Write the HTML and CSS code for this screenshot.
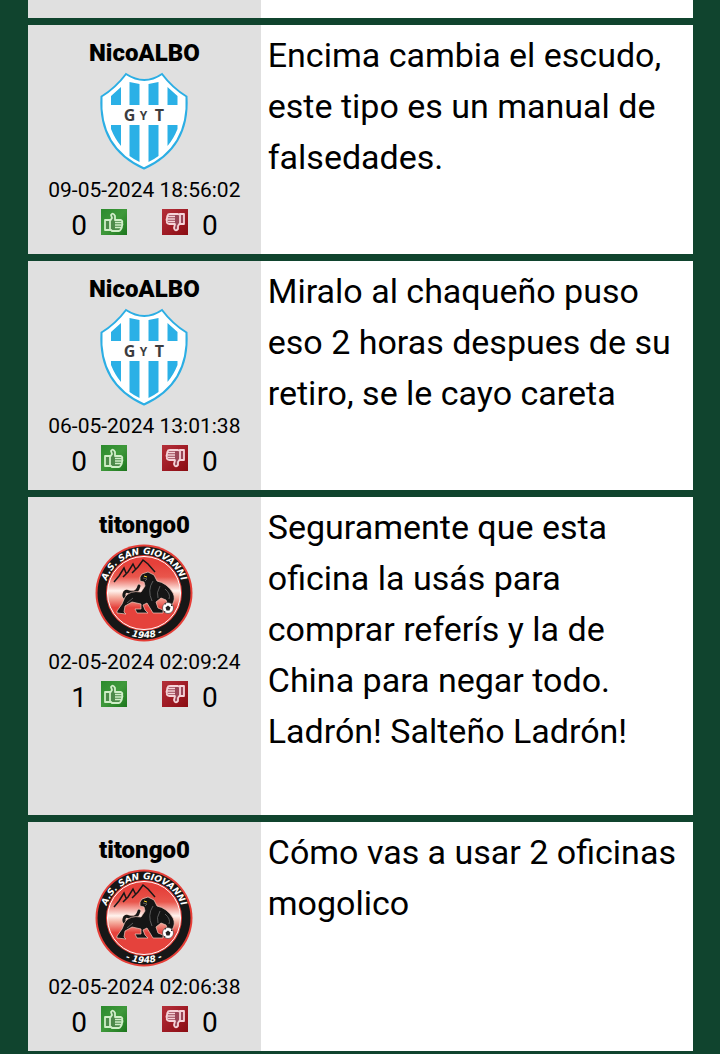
FILE: index.html
```html
<!DOCTYPE html>
<html lang="es">
<head>
<meta charset="utf-8">
<meta name="viewport" content="width=device-width, initial-scale=1">
<title>Comentarios</title>
<link rel="stylesheet" href="styles.css">
</head>
<body>
<svg class="sprites" aria-hidden="true">
  <defs>
    <linearGradient id="sky" x1="0" y1="0" x2="0" y2="1">
      <stop offset="0.1" stop-color="#e5403a"/>
      <stop offset="0.28" stop-color="#e9564c"/>
      <stop offset="0.47" stop-color="#fff3ee"/>
      <stop offset="0.55" stop-color="#f6b5a6"/>
      <stop offset="0.7" stop-color="#e5423c"/>
    </linearGradient>
    <linearGradient id="green" x1="0" y1="0" x2="1" y2="1">
      <stop offset="0" stop-color="#2b8a2d"/>
      <stop offset="0.5" stop-color="#3f993b"/>
      <stop offset="1" stop-color="#1c761c"/>
    </linearGradient>
    <linearGradient id="red" x1="0" y1="0" x2="1" y2="1">
      <stop offset="0" stop-color="#b5303a"/>
      <stop offset="0.5" stop-color="#a01c26"/>
      <stop offset="1" stop-color="#8a0c12"/>
    </linearGradient>
    <path id="arc-top" d="M10 56 A39.500 39.500 0 1 1 88 56"/>
    <path id="arc-bottom" d="M4 49 A45 45 0 0 0 94 49"/>
    <clipPath id="shield-clip"><path d="M27 5 Q45 14 62 5 Q72 18 84 26 Q85 74 44.500 94 Q4 74 5 26 Q17 18 27 5Z"/></clipPath>
  </defs>
  <symbol id="shield" viewBox="0 0 89 98">
    <path d="M26.500 2 Q45 14 62.500 2 Q73 16 87 24.500 Q90 76 44.500 96.500 Q-1 76 2 24.500 Q16 16 26.500 2Z" fill="#fff" stroke="#2caee4" stroke-width="2"/>
    <g clip-path="url(#shield-clip)" fill="#2bb0e6">
      <path d="M11.500 24L21.500 15V33h-10zM30 10l10 2v21h-10zM49 12l10-2v23h-10zM68 15l10 9v9h-10zM11.500 53h10v21q-6-7-10-17zM30 53h10v37q-6-3-10-6zM49 53h10v31q-4 3-10 6zM68 53h10v4q-4 10-10 17z"/>
    </g>
    <g class="shield-text" text-anchor="middle">
      <text x="30" y="49" font-size="16">G</text>
      <text x="44" y="48" font-size="12">Y</text>
      <text x="60" y="49" font-size="16">T</text>
    </g>
  </symbol>
  <symbol id="panther" viewBox="0 0 98 98">
    <circle cx="49" cy="49" r="48.500" fill="#e63d36"/>
    <circle cx="49" cy="49" r="46.500" fill="#171717"/>
    <circle cx="49" cy="49" r="38" fill="#e63d36"/>
    <circle cx="49" cy="49" r="36.500" fill="url(#sky)" stroke="#fff" stroke-width="1"/>
    <path d="M19 38L24 32 29 24 31 29M28 33L33 28 38 20 41 26M37 29L43 23 48 16 53 20 60 28" fill="none" stroke="#171717" stroke-width="1.500"/>
    <path d="M36 55Q28 55 29 50Q30 46 34 48Q42 50 44 42" fill="none" stroke="#f3c8bd" stroke-width="4" stroke-linecap="round"/>
    <path d="M36 55Q28 55 29 50Q30 46 34 48Q42 50 44 42" fill="none" stroke="#171717" stroke-width="3" stroke-linecap="round"/>
    <path d="M45 33L47 30 53 28 59 31 62 37Q72 39 78 49Q81 55 77 61L73 61 71 56 66 54 61 58 63 64 68 66 68 69 58 69 52 59 48 61 50 66 53 69 42 69 40 65 46 65 46 60 37 58 30 62 29 68 31 70 22 69 22 67 27 60 30 53Q35 46 46 48L50 42 49 38 45 37Z" fill="#151515" stroke="#f3c8bd" stroke-width="0.700"/>
    <path d="M48 34l4 1-2 2M58 37Q52 46 57 57M65 42Q61 49 63 54M70 45Q76 50 74 55M38 54l-6 5" fill="none" stroke="#6c6c6c" stroke-width="0.800"/>
    <path d="M49 32l3 1" stroke="#ffd92c" stroke-width="1"/>
    <circle cx="73" cy="64" r="5.500" fill="#fff" stroke="#333" stroke-width="0.600"/>
    <path d="M73 61.500l2.500 2-1 3h-3l-1-3zM69 60l2-1 0 1.500zM76 60l2 2-2 0zM69 67l2 1-2 .5z" fill="#222"/>
    <g class="club-text" text-anchor="middle">
      <text font-size="9"><textPath href="#arc-top" startOffset="50%">A.S. SAN GIOVANNI</textPath></text>
      <text font-size="9"><textPath href="#arc-bottom" startOffset="50%">- 1948 -</textPath></text>
    </g>
  </symbol>
  <symbol id="up" viewBox="0 0 26 26">
    <path d="M0 0h26v26H0z" fill="url(#green)"/>
    <path d="M4 11h5v10H4zM9 12l2-3-1-3q2-3 4 1v4h6q2 1 1 3 1 1 0 3 0 2-1 3-1 2-2 2h-7l-2-2z" fill="#4d8a4a" stroke="#d0eec8" stroke-width="1.800" stroke-linejoin="round"/>
    <path d="M14 13.500h7M14 16h7M14 18.500h6" stroke="#d0eec8" stroke-width="1.300"/>
  </symbol>
  <symbol id="down" viewBox="0 0 26 26">
    <path d="M0 0h26v26H0z" fill="url(#red)"/>
    <path d="M22 5h-4v10h4zM18 14l-2 3v3q-3 3-4-1l1-4H7q-3-1-2-3-1-1 0-3 0-2 1-3 0-1 2-1h8l2 1z" fill="#9a4657" stroke="#f5d3d8" stroke-width="1.800" stroke-linejoin="round"/>
    <path d="M5 7.500h8M5 10h8M6 12.500h7" stroke="#f5d3d8" stroke-width="1.300"/>
  </symbol>
</svg>

<main class="comments">
  <article class="comment comment-tail"><div class="author"></div><div class="message"></div></article>

  <article class="comment">
    <div class="author">
      <h2 class="name">NicoALBO</h2>
      <svg class="badge" role="img" aria-label="Escudo"><use href="#shield"/></svg>
      <time class="date">09-05-2024 18:56:02</time>
      <div class="votes">
        <span class="vote">0<button class="thumb" type="button" aria-label="Me gusta"><svg class="icon"><use href="#up"/></svg></button></span>
        <span class="vote"><button class="thumb" type="button" aria-label="No me gusta"><svg class="icon"><use href="#down"/></svg></button>0</span>
      </div>
    </div>
    <p class="message">Encima cambia el escudo, este tipo es un manual de falsedades.</p>
  </article>

  <article class="comment">
    <div class="author">
      <h2 class="name">NicoALBO</h2>
      <svg class="badge" role="img" aria-label="Escudo"><use href="#shield"/></svg>
      <time class="date">06-05-2024 13:01:38</time>
      <div class="votes">
        <span class="vote">0<button class="thumb" type="button" aria-label="Me gusta"><svg class="icon"><use href="#up"/></svg></button></span>
        <span class="vote"><button class="thumb" type="button" aria-label="No me gusta"><svg class="icon"><use href="#down"/></svg></button>0</span>
      </div>
    </div>
    <p class="message">Miralo al chaqueño puso eso 2 horas despues de su retiro, se le cayo careta</p>
  </article>

  <article class="comment">
    <div class="author">
      <h2 class="name">titongo0</h2>
      <svg class="badge" role="img" aria-label="Escudo"><use href="#panther"/></svg>
      <time class="date">02-05-2024 02:09:24</time>
      <div class="votes">
        <span class="vote">1<button class="thumb" type="button" aria-label="Me gusta"><svg class="icon"><use href="#up"/></svg></button></span>
        <span class="vote"><button class="thumb" type="button" aria-label="No me gusta"><svg class="icon"><use href="#down"/></svg></button>0</span>
      </div>
    </div>
    <p class="message">Seguramente que esta oficina la usás para comprar referís y la de China para negar todo. Ladrón! Salteño Ladrón!<br><br></p>
  </article>

  <article class="comment">
    <div class="author">
      <h2 class="name">titongo0</h2>
      <svg class="badge" role="img" aria-label="Escudo"><use href="#panther"/></svg>
      <time class="date">02-05-2024 02:06:38</time>
      <div class="votes">
        <span class="vote">0<button class="thumb" type="button" aria-label="Me gusta"><svg class="icon"><use href="#up"/></svg></button></span>
        <span class="vote"><button class="thumb" type="button" aria-label="No me gusta"><svg class="icon"><use href="#down"/></svg></button>0</span>
      </div>
    </div>
    <p class="message">Cómo vas a usar 2 oficinas mogolico</p>
  </article>
</main>
</body>
</html>
```
FILE: styles.css
```css
* { box-sizing: border-box; }

body {
  margin: 0;
  background: #10442e;
  color: #000;
  font-family: Roboto, sans-serif;
}

.sprites { position: absolute; width: 0; height: 0; }

.comments {
  display: flex;
  flex-direction: column;
  gap: 7px;
  padding: 0 27px 4px 28px;
}

.comment {
  display: grid;
  grid-template-columns: 35% 1fr;
  background: #fff;
}

.comment-tail { min-height: 18px; }
.comment-tail .author, .comment-tail .message { padding: 0; }

.author {
  display: flex;
  flex-direction: column;
  align-items: center;
  padding: 14px 0 17px;
  background: #e0e0e0;
}

.name {
  margin: 0;
  font-size: 24px;
  line-height: 28px;
  font-weight: 900;
}

.badge { width: 98px; height: 98px; margin-top: 5px; }

.date { margin-top: 6px; font-size: 21px; line-height: 28px; }

.votes { display: flex; gap: 35px; margin-top: 5px; }

.vote {
  display: flex;
  gap: 14px;
  height: 28px;
  font-size: 28px;
  line-height: 34px;
}

.thumb {
  width: 26px;
  height: 26px;
  padding: 0;
  border: 0;
  background: none;
  cursor: pointer;
}

.icon { display: block; width: 26px; height: 26px; }

.message {
  margin: 0;
  padding: 5px 7px 7px;
  font-size: 34px;
  line-height: 51px;
}

.shield-text { fill: #3c3c3f; font-family: "Open Sans", sans-serif; font-weight: 700; }

.club-text { fill: #fff; font-family: "DejaVu Sans", sans-serif; font-weight: 700; font-style: italic; }
```
